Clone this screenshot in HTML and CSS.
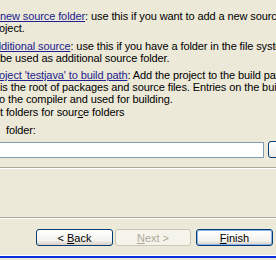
FILE: index.html
```html
<!DOCTYPE html>
<html lang="en">
<head>
    <meta charset="UTF-8">
    <title>New Java Project</title>
    <link rel="stylesheet" href="styles.css">
</head>
<body>
<div class="dialog">
    <div class="content">
        <div class="para first">
            <div class="line start"><a class="link">&nbsp;new source folder</a>: use this if you want to add a new source folder to your</div>
            <div class="line cut">oject.</div>
        </div>
        <div class="para second">
            <div class="line cut-d"><a class="link">dditional source</a>: use this if you have a folder in the file system that should</div>
            <div class="line">be used as additional source folder.</div>
        </div>
        <div class="para">
            <div class="line cut"><a class="link">oject 'testjava' to build path</a>: Add the project to the build path if the project</div>
            <div class="line">is the root of packages and source files. Entries on the build path are visible</div>
            <div class="line cut">o the compiler and used for building.</div>
        </div>
        <div class="check">t folders for sour<u>c</u>e folders</div>
        <div class="label">&nbsp;folder:</div>
        <div class="field-row">
            <div class="field"></div>
            <div class="browse"></div>
        </div>
    </div>
    <div class="sep"></div>
    <div class="spacer"></div>
    <div class="sep"></div>
    <div class="buttons">
        <button class="btn back">&lt; <u>B</u>ack</button>
        <button class="btn disabled"><u>N</u>ext &gt;</button>
        <button class="btn default"><u>F</u>inish</button>
    </div>
    <div class="frame"></div>
</div>
</body>
</html>
```

FILE: styles.css
```css
body, html {
    margin: 0;
    padding: 0;
    width: 276px;
    height: 260px;
    overflow: hidden;
    background-color: #ece9d8;
}
.dialog {
    font-family: Tahoma, "Liberation Sans", Arial, sans-serif;
    font-size: 11px;
    letter-spacing: -0.1px;
    color: #000000;
    width: 276px;
    height: 260px;
    display: flex;
    flex-direction: column;
    overflow: hidden;
}
.content {
    padding-top: 10px;
    height: 157px;
}
.para.first {
    margin-bottom: 6px;
}
.para.second {
    margin-bottom: 5px;
}
.line {
    white-space: nowrap;
    line-height: 12px;
    height: 12px;
}
.start {
    margin-left: -3px;
}
.cut {
    margin-left: -1px;
}
.cut-d {
    margin-left: -5px;
}
.link {
    color: #22228e;
    text-decoration: underline;
}
.check {
    white-space: nowrap;
    line-height: 12px;
    margin-top: 1px;
}
.label {
    white-space: nowrap;
    line-height: 12px;
    margin-top: 6px;
    padding-left: 3px;
}
.field-row {
    display: flex;
    margin-top: 6px;
}
.field {
    flex-shrink: 0;
    width: 263px;
    height: 14px;
    margin-left: -1px;
    background-color: #ffffff;
    border: 1px solid #7f9db9;
}
.browse {
    flex-shrink: 0;
    width: 30px;
    height: 15px;
    margin-left: 4px;
    margin-top: -1px;
    border: 1px solid #003c74;
    border-radius: 3px;
    background: linear-gradient(#ffffff, #ecebe6);
}
.sep {
    border-top: 1px solid #aca899;
    border-bottom: 1px solid #ffffff;
    height: 0;
}
.spacer {
    height: 48px;
}
.buttons {
    display: flex;
    justify-content: flex-end;
    padding-right: 3px;
    margin-top: 10px;
}
.btn {
    font-family: Tahoma, "Liberation Sans", Arial, sans-serif;
    font-size: 11px;
    width: 77px;
    height: 17px;
    padding: 0;
    border: 1px solid #003c74;
    border-radius: 3px;
    background: linear-gradient(#ffffff, #f3f2ec 70%, #d6d0c5);
    color: #000000;
}
.btn.disabled {
    width: 76px;
    margin-left: 2px;
    border-color: #c9c7ba;
    background: #f5f4ea;
    color: #aca899;
}
.btn.default {
    margin-left: 5px;
    box-shadow: inset 0 0 0 1px #8fb3e8;
}
.frame {
    margin-top: auto;
    height: 2px;
    border-top: 1px solid #ffffff;
    background-color: #0831d9;
    margin-bottom: 2px;
}
```
